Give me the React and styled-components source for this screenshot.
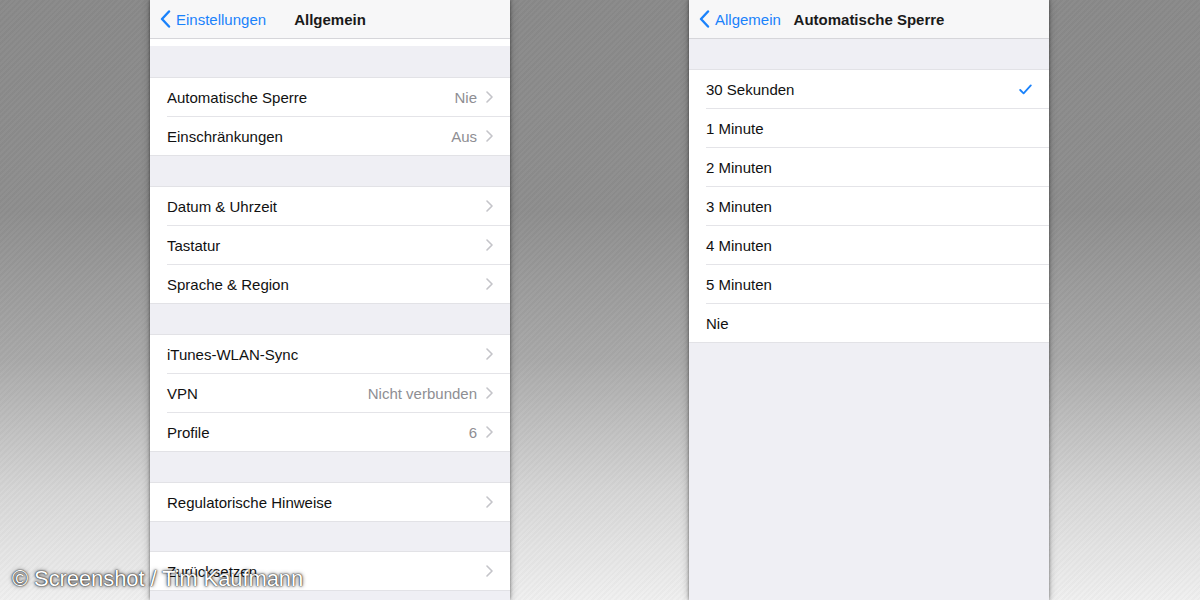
import React from 'react'
import styled, { createGlobalStyle } from 'styled-components'

const GlobalStyle = createGlobalStyle`
	html, body {
		margin: 0;
		padding: 0;
		height: 100%;
		overflow: hidden;
	}
	body {
		font-family: "Liberation Sans", Arial, sans-serif;
		-webkit-font-smoothing: antialiased;
	}
`

const Backdrop = styled.div`
	position: relative;
	width: 1200px;
	height: 600px;
	box-sizing: border-box;
	padding-left: 150px;
	display: flex;
	gap: 179px;
	background:
		repeating-linear-gradient(135deg, rgba(255,255,255,0.02) 0 2px, rgba(0,0,0,0.02) 2px 4px),
		linear-gradient(180deg, #8a8a8a 0%, #8e8e8e 35%, #a9a9a9 60%, #d6d6d6 82%, #f0f0f0 100%);
	overflow: hidden;
`

const Screen = styled.div`
	width: 360px;
	height: 600px;
	background: #efeff4;
	display: flex;
	flex-direction: column;
	box-shadow: 0 0 3px rgba(0,0,0,0.45), 0 0 8px rgba(0,0,0,0.25);
	overflow: hidden;
`

const NavBar = styled.div`
	height: 38px;
	flex-shrink: 0;
	display: grid;
	grid-template-columns: 1fr auto 1fr;
	align-items: center;
	background: #f7f7f8;
	border-bottom: 1px solid #d6d6da;
`

const Back = styled.div`
	display: flex;
	align-items: center;
	gap: 5px;
	padding-left: 10px;
	color: #1a82fb;
	font-size: 15px;
`

const Title = styled.div`
	font-size: 15px;
	font-weight: bold;
	color: #1a1a1a;
`

const Spacer = styled.div`
	height: ${p => p.h}px;
	flex-shrink: 0;
	background: ${p => (p.white ? '#fff' : '#efeff4')};
`

const Group = styled.div`
	background: #fff;
	border-top: 1px solid #e2e2e6;
	border-bottom: 1px solid #e2e2e6;
	flex-shrink: 0;
`

const Row = styled.div`
	height: 38px;
	display: flex;
	align-items: center;
	margin-left: 17px;
	padding-right: 17px;
	font-size: 15px;
	color: #111;
	& + & {
		border-top: 1px solid #e4e4e8;
	}
`

const Label = styled.span`
	flex: 1;
`

const Value = styled.span`
	color: #8e8e93;
	margin-right: 9px;
`

const Watermark = styled.div`
	position: absolute;
	left: 12px;
	bottom: 8px;
	font-size: 22px;
	color: #fff;
	letter-spacing: -0.1px;
	text-shadow: 0 0 1px #222, 0 0 2px #333, 0 0 4px rgba(0,0,0,0.7);
`

const BackChevron = () => (
	<svg width="11" height="18" viewBox="0 0 11 18">
		<path d="M9 1.5 L2 9 L9 16.5" fill="none" stroke="#1a82fb" strokeWidth="2.4" strokeLinecap="round" strokeLinejoin="round" />
	</svg>
)

const Chevron = () => (
	<svg width="7" height="12" viewBox="0 0 7 12">
		<path d="M1 1 L6 6 L1 11" fill="none" stroke="#c4c4c9" strokeWidth="1.6" strokeLinecap="round" strokeLinejoin="round" />
	</svg>
)

const Check = () => (
	<svg width="13" height="11" viewBox="0 0 13 11">
		<path d="M1.2 6 L4.6 9.4 L11.8 1.4" fill="none" stroke="#1a82fb" strokeWidth="1.8" strokeLinecap="round" strokeLinejoin="round" />
	</svg>
)

// gap above each group, in px
const general = [
	{ gap: 31, rows: [{ label: 'Automatische Sperre', value: 'Nie' }, { label: 'Einschränkungen', value: 'Aus' }] },
	{ gap: 30, rows: [{ label: 'Datum & Uhrzeit' }, { label: 'Tastatur' }, { label: 'Sprache & Region' }] },
	{ gap: 30, rows: [{ label: 'iTunes-WLAN-Sync' }, { label: 'VPN', value: 'Nicht verbunden' }, { label: 'Profile', value: '6' }] },
	{ gap: 30, rows: [{ label: 'Regulatorische Hinweise' }] },
	{ gap: 29, rows: [{ label: 'Zurücksetzen' }] },
]

const lockTimes = ['30 Sekunden', '1 Minute', '2 Minuten', '3 Minuten', '4 Minuten', '5 Minuten', 'Nie']

const Header = ({ back, title }) => (
	<NavBar>
		<Back><BackChevron />{back}</Back>
		<Title>{title}</Title>
		<div />
	</NavBar>
)

const App = () => (
	<Backdrop>
		<GlobalStyle />
		<Screen>
			<Header back="Einstellungen" title="Allgemein" />
			<Spacer h={7} white />
			{general.map((group, i) => (
				<React.Fragment key={i}>
					<Spacer h={group.gap} />
					<Group>
						{group.rows.map(item => (
							<Row key={item.label}>
								<Label>{item.label}</Label>
								{item.value && <Value>{item.value}</Value>}
								<Chevron />
							</Row>
						))}
					</Group>
				</React.Fragment>
			))}
		</Screen>
		<Screen>
			<Header back="Allgemein" title="Automatische Sperre" />
			<Spacer h={30} />
			<Group>
				{lockTimes.map((t, i) => (
					<Row key={t}>
						<Label>{t}</Label>
						{i === 0 && <Check />}
					</Row>
				))}
			</Group>
		</Screen>
		<Watermark>© Screenshot / Tim Kaufmann</Watermark>
	</Backdrop>
)

export default App
